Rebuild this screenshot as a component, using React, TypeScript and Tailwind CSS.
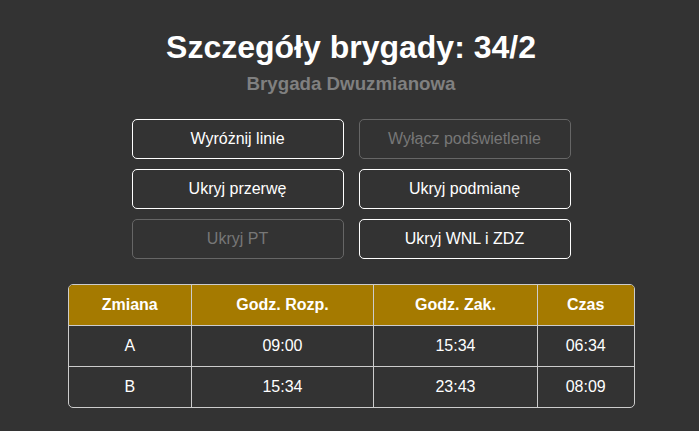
import React from "react";

const buttons = [
  { label: "Wyróżnij linie", disabled: false },
  { label: "Wyłącz podświetlenie", disabled: true },
  { label: "Ukryj przerwę", disabled: false },
  { label: "Ukryj podmianę", disabled: false },
  { label: "Ukryj PT", disabled: true },
  { label: "Ukryj WNL i ZDZ", disabled: false },
];

const rows = [
  { shift: "A", start: "09:00", end: "15:34", time: "06:34" },
  { shift: "B", start: "15:34", end: "23:43", time: "08:09" },
];

export default function App() {
  return (
    <div className="w-[699px] h-[431px] bg-[#333333] text-white font-['Liberation_Sans',Arial,sans-serif] overflow-hidden">
      <div className="flex flex-col items-center pt-[29px] pl-[3px]">
        {/* Nagłówek */}
        <h1 className="text-[32px] leading-[37px] font-bold">Szczegóły brygady: 34/2</h1>
        <h2 className="mt-[7px] text-[18.72px] leading-[21px] font-bold text-[#808080]">Brygada Dwuzmianowa</h2>

        {/* Przyciski */}
        <div className="mt-[25px] grid grid-cols-[212px_212px] gap-x-[15px] gap-y-[10px]">
          {buttons.map((b) => (
            <button
              key={b.label}
              disabled={b.disabled}
              className={
                b.disabled
                  ? "h-[40px] rounded-[5px] border border-[#666666] text-[16px] text-[#777777]"
                  : "h-[40px] rounded-[5px] border border-white text-[16px] text-white"
              }
            >
              {b.label}
            </button>
          ))}
        </div>

        {/* Tabela zmian */}
        <div className="mt-[25px] w-[567px] rounded-[5px] border border-[#cccccc] overflow-hidden">
          <table className="w-full table-fixed border-collapse text-[16px]">
            <colgroup>
              <col className="w-[123px]" />
              <col className="w-[182px]" />
              <col className="w-[164px]" />
              <col />
            </colgroup>
            <thead>
              <tr className="h-[40px] bg-[#a57a00]">
                <th className="font-bold">Zmiana</th>
                <th className="font-bold border-l border-[#cccccc]">Godz. Rozp.</th>
                <th className="font-bold border-l border-[#cccccc]">Godz. Zak.</th>
                <th className="font-bold border-l border-[#cccccc]">Czas</th>
              </tr>
            </thead>
            <tbody>
              {rows.map((r) => (
                <tr key={r.shift} className="h-[41px] border-t border-[#cccccc]">
                  <td className="text-center">{r.shift}</td>
                  <td className="text-center border-l border-[#cccccc]">{r.start}</td>
                  <td className="text-center border-l border-[#cccccc]">{r.end}</td>
                  <td className="text-center border-l border-[#cccccc]">{r.time}</td>
                </tr>
              ))}
            </tbody>
          </table>
        </div>
      </div>
    </div>
  );
}
